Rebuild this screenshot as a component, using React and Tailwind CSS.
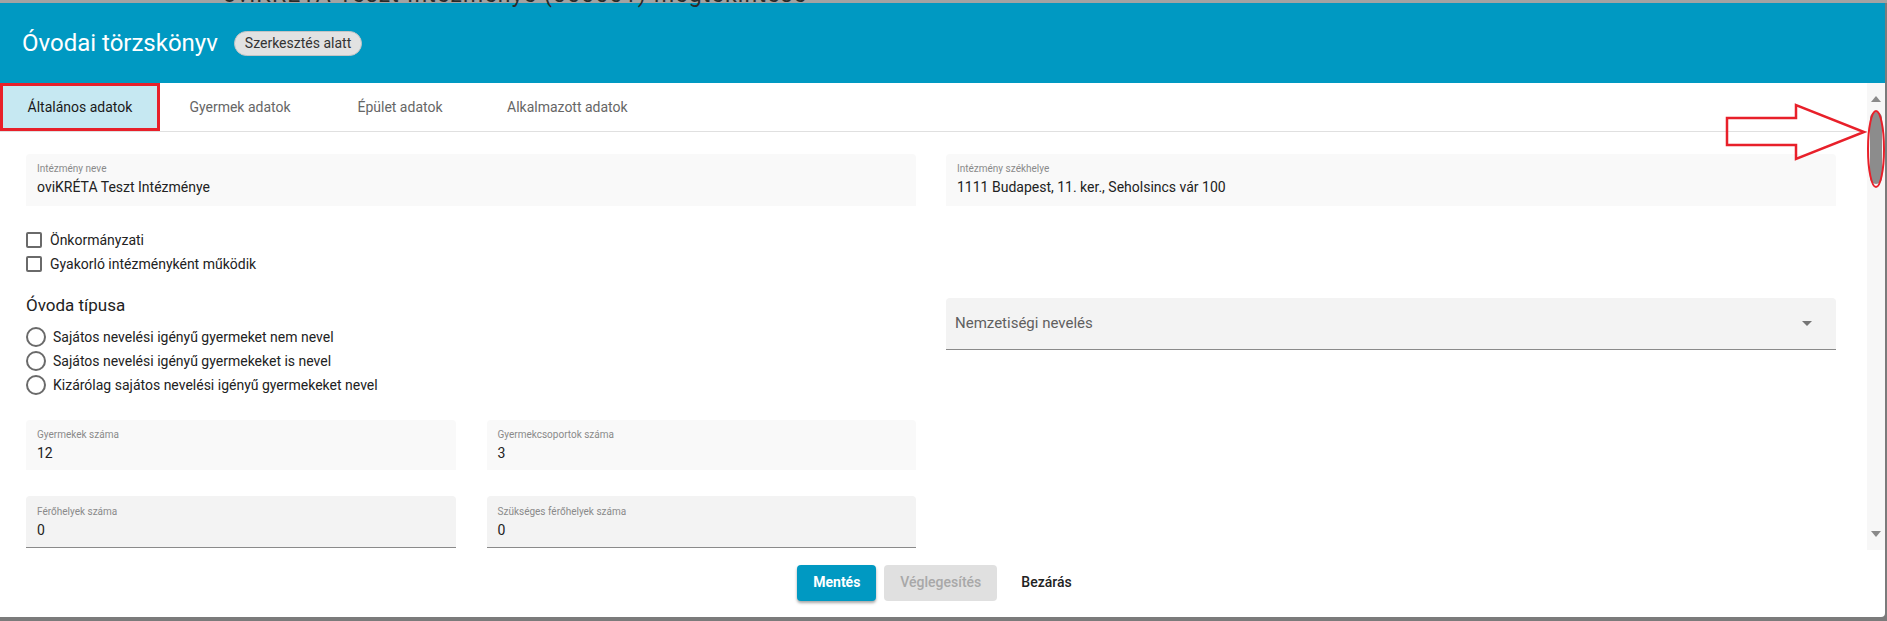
import React from 'react';

const tabs = ['Általános adatok', 'Gyermek adatok', 'Épület adatok', 'Alkalmazott adatok'];

const radios = [
  'Sajátos nevelési igényű gyermeket nem nevel',
  'Sajátos nevelési igényű gyermekeket is nevel',
  'Kizárólag sajátos nevelési igényű gyermekeket nevel'
];

function ReadField({ label, value, height = 'h-[52px]' }) {
  return (
    <div className={`${height} rounded-t-[4px] bg-[#f9f9f9] px-[11px] pt-[9px]`}>
      <div className="text-[10px] leading-[12px] text-[#8a8a8a]">{label}</div>
      <div className="mt-[2px] text-[14px] leading-[20px] text-[#222]">{value}</div>
    </div>
  );
}

function EditField({ label, value }) {
  return (
    <div className="h-[52px] rounded-t-[4px] border-b border-[#8a8a8a] bg-[#f3f3f3] px-[11px] pt-[10px]">
      <div className="text-[10px] leading-[12px] text-[#8a8a8a]">{label}</div>
      <div className="mt-[2px] text-[14px] leading-[20px] text-[#222]">{value}</div>
    </div>
  );
}

export default function App() {
  return (
    <div className="relative h-[621px] w-[1887px] overflow-hidden bg-[#7b7b7b] font-['Roboto',sans-serif]">
      <div className="h-[3px] bg-[#a3a3a3]" />

      <div className="absolute left-0 top-[3px] flex h-[614px] w-[1885px] flex-col rounded-br-[4px] bg-white">
        <div className="flex h-[80px] shrink-0 items-center gap-[16px] bg-[#0099c2] px-[22px]">
          <h1 className="text-[24px] text-white">Óvodai törzskönyv</h1>
          <span className="flex h-[25px] items-center rounded-full border border-[#c4c4c4] bg-[#e2e2e2] px-[10px] text-[14px] text-[#333]">
            Szerkesztés alatt
          </span>
        </div>

        <div className="flex h-[467px] shrink-0">
          <div className="flex flex-1 flex-col overflow-hidden">
            <div className="flex h-[49px] shrink-0 border-b border-[#e0e0e0]">
              {tabs.map((t, i) => (
                <div
                  key={t}
                  className={
                    i === 0
                      ? 'flex min-w-[160px] items-center justify-center border-[3px] border-[#e8202a] bg-[#c6e8f2] px-[24px] text-[14px] text-[#1a1a1a]'
                      : 'flex min-w-[160px] items-center justify-center px-[27px] text-[14px] text-[#666]'
                  }
                >
                  {t}
                </div>
              ))}
            </div>

            <div className="grid grid-cols-2 gap-x-[30px] pl-[26px] pr-[31px] pt-[22px]">
              <div>
                <ReadField label="Intézmény neve" value="oviKRÉTA Teszt Intézménye" />

                <div className="mt-[22px] flex flex-col">
                  {['Önkormányzati', 'Gyakorló intézményként működik'].map((c) => (
                    <label key={c} className="flex h-[24px] items-center gap-[8px] text-[14px] text-[#222]">
                      <span className="h-[16px] w-[16px] rounded-[2px] border-2 border-[#6a6a6a]" />
                      {c}
                    </label>
                  ))}
                </div>

                <div className="mt-[17px] text-[17px] leading-[24px] text-[#222]">Óvoda típusa</div>
                <div className="mt-[8px] flex flex-col">
                  {radios.map((r) => (
                    <label key={r} className="flex h-[24px] items-center gap-[7px] text-[14px] text-[#222]">
                      <span className="h-[20px] w-[20px] rounded-full border-2 border-[#6a6a6a]" />
                      {r}
                    </label>
                  ))}
                </div>

                <div className="mt-[23px] grid grid-cols-2 gap-x-[31px] gap-y-[26px]">
                  <ReadField label="Gyermekek száma" value="12" height="h-[50px]" />
                  <ReadField label="Gyermekcsoportok száma" value="3" height="h-[50px]" />
                  <EditField label="Férőhelyek száma" value="0" />
                  <EditField label="Szükséges férőhelyek száma" value="0" />
                </div>
              </div>

              <div>
                <ReadField label="Intézmény székhelye" value="1111 Budapest, 11. ker., Seholsincs vár 100" />
                <div className="mt-[92px] flex h-[52px] items-center justify-between rounded-t-[4px] border-b border-[#8a8a8a] bg-[#f3f3f3] pl-[9px] pr-[24px]">
                  <span className="text-[15px] text-[#5f5f5f]">Nemzetiségi nevelés</span>
                  <svg width="10" height="5" viewBox="0 0 10 5">
                    <path d="M0 0h10L5 5z" fill="#757575" />
                  </svg>
                </div>
              </div>
            </div>
          </div>

          <div className="relative flex w-[18px] shrink-0 flex-col items-center bg-[#f7f7f7]">
            <svg className="mt-[13px]" width="10" height="6" viewBox="0 0 10 6">
              <path d="M0 6L5 0l5 6z" fill="#8a8a8a" />
            </svg>
            <div className="mt-[10px] h-[72px] w-[12px] rounded-full bg-[#8c8c8c]" />
            <svg className="mt-auto mb-[13px]" width="10" height="6" viewBox="0 0 10 6">
              <path d="M0 0h10L5 6z" fill="#8a8a8a" />
            </svg>
          </div>
        </div>

        <div className="flex flex-1 items-center justify-center gap-[8px] pb-[2px]">
          <button className="h-[36px] w-[79px] rounded-[4px] bg-[#0099c2] text-[14px] font-bold text-white shadow-[0_2px_3px_rgba(0,0,0,0.35)]">
            Mentés
          </button>
          <button className="h-[36px] w-[113px] rounded-[4px] bg-[#e0e0e0] text-[14px] font-medium text-[#a8a8a8]">
            Véglegesítés
          </button>
          <button className="h-[36px] px-[16px] text-[14px] font-medium text-[#222]">Bezárás</button>
        </div>
      </div>

      <div className="pointer-events-none absolute left-[223px] top-[-20px] text-[23px] leading-[30px] tracking-[1.2px] text-[#2a2a2a]">
        oviKRÉTA Teszt Intézménye (000001) megtekintése
      </div>

      <svg className="pointer-events-none absolute left-[1724px] top-[103px]" width="164" height="90" viewBox="0 0 164 90">
        <path d="M3 15h69V2l68 27-68 27V42H3z" fill="none" stroke="#e8202a" strokeWidth="2.5" strokeLinejoin="miter" />
        <ellipse cx="152" cy="46" rx="8" ry="38" fill="none" stroke="#e8202a" strokeWidth="2" />
      </svg>
    </div>
  );
}
